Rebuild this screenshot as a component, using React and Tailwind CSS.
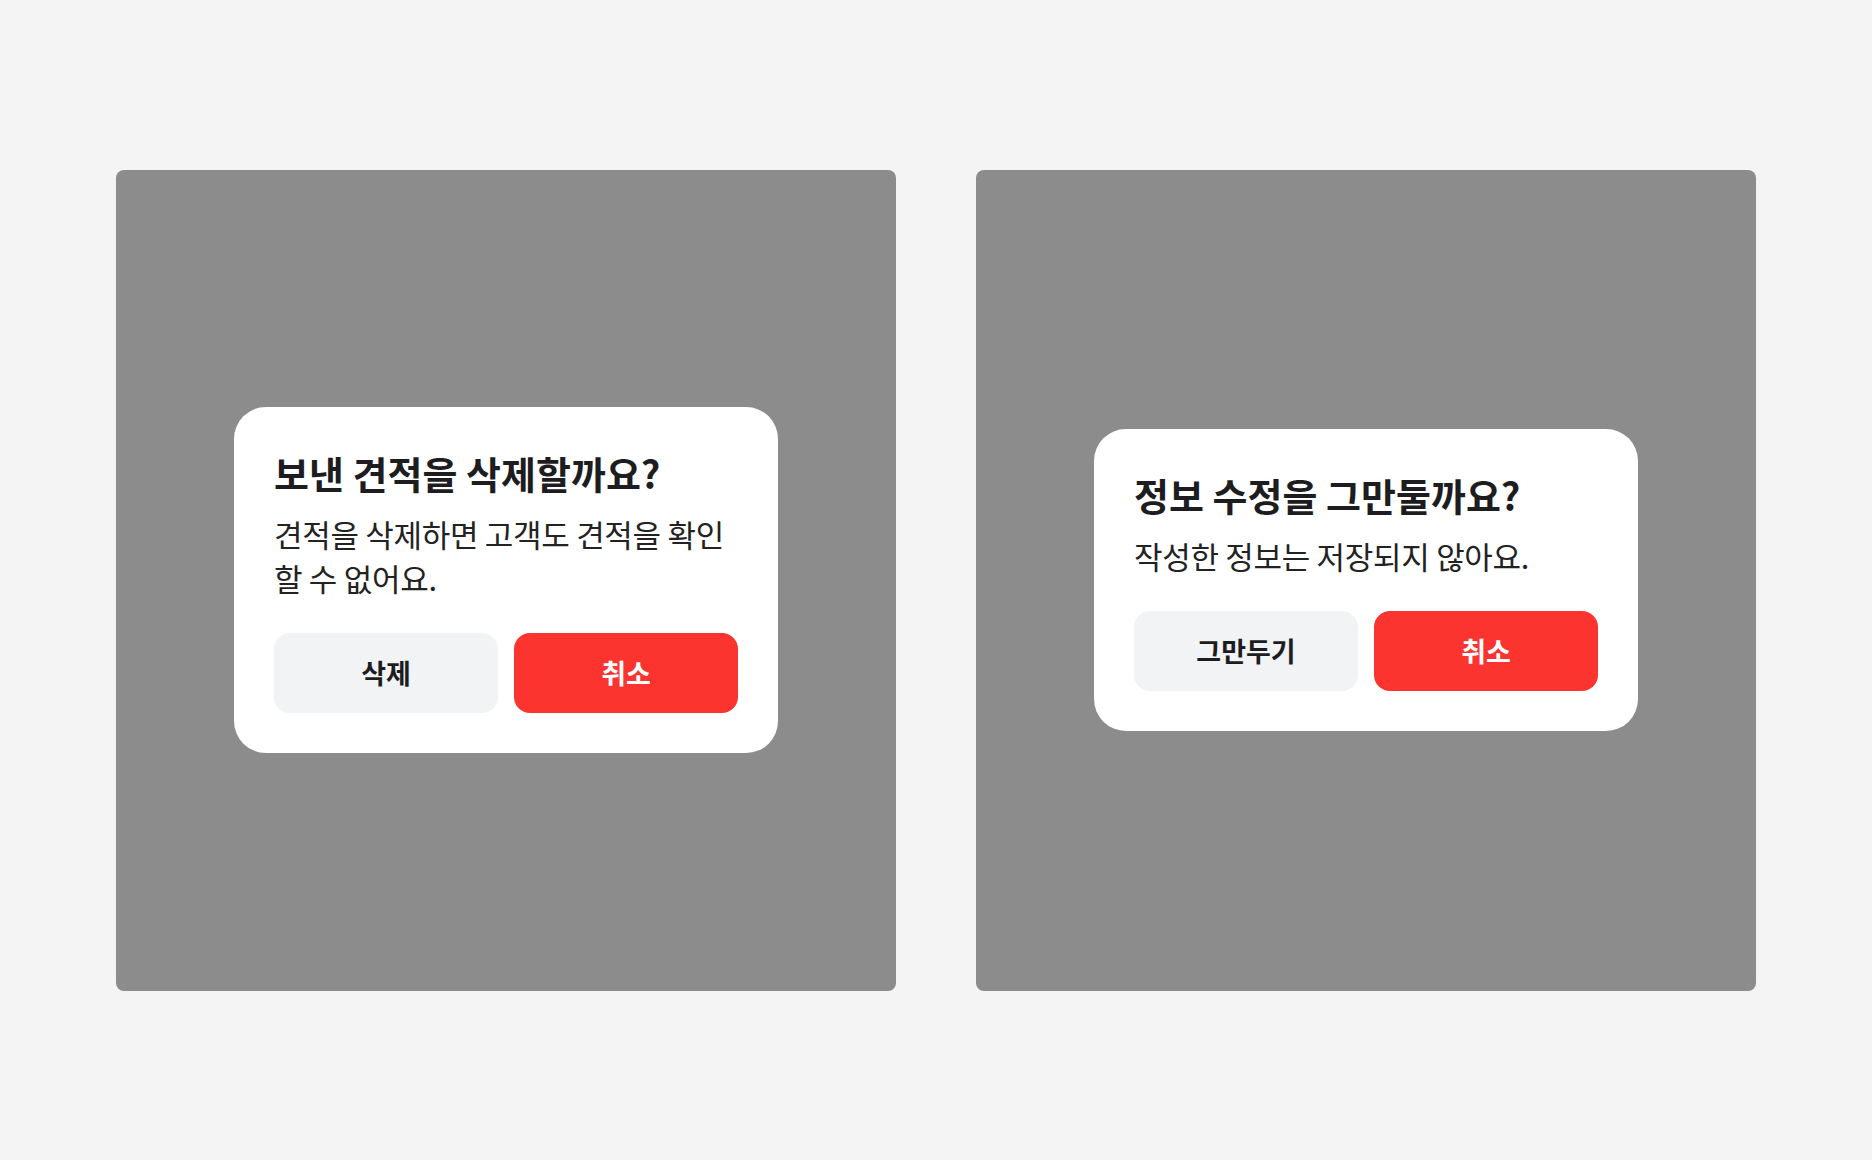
import React from "react";

function Dialog({ title, body, left }) {
  return (
    <div className="w-[544px] rounded-[32px] bg-white px-10 pt-[42px] pb-10">
      <h2 className="text-[38px] leading-[48px] font-bold text-[#1d1d1f] tracking-normal">
        {title}
      </h2>
      <p className="mt-[15px] text-[31px] leading-[44px] font-normal text-[#222222] tracking-[-0.3px]">
        {body}
      </p>
      <div className="mt-[33px] grid grid-cols-2 gap-4">
        <button className="h-20 rounded-2xl bg-[#f2f3f5] text-[27px] font-bold text-[#1d1d1f]">
          {left}
        </button>
        <button className="h-20 rounded-2xl bg-[#fc342f] text-[27px] font-bold text-white">
          취소
        </button>
      </div>
    </div>
  );
}

function Panel({ children }) {
  return (
    <div className="flex h-[821px] w-[780px] items-center justify-center rounded-lg bg-[#8c8c8c]">
      {children}
    </div>
  );
}

export default function App() {
  return (
    <div
      className="flex min-h-screen w-full items-center justify-center gap-20 bg-[#f4f4f4]"
      style={{ fontFamily: '"Noto Sans CJK KR", "Noto Sans", sans-serif' }}
    >
      <Panel>
        <Dialog
          title="보낸 견적을 삭제할까요?"
          body="견적을 삭제하면 고객도 견적을 확인 할 수 없어요."
          left="삭제"
        />
      </Panel>
      <Panel>
        <Dialog
          title="정보 수정을 그만둘까요?"
          body="작성한 정보는 저장되지 않아요."
          left="그만두기"
        />
      </Panel>
    </div>
  );
}
